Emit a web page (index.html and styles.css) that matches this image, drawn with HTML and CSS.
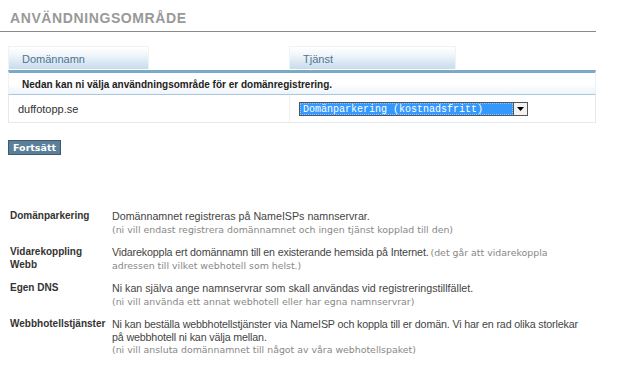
FILE: index.html
```html
<!DOCTYPE html>
<html lang="sv">
<head>
  <meta charset="UTF-8" />
  <title>Användningsområde</title>
  <link rel="stylesheet" href="styles.css">
</head>
<body>
  <div class="page">
    <h1 class="title">ANVÄNDNINGSOMRÅDE</h1>

    <div class="order">
      <div class="tabs">
        <div class="tab-col"><span class="tab tab-name">Domännamn</span></div>
        <div class="tab-col"><span class="tab tab-service">Tjänst</span></div>
      </div>
      <div class="info-row">Nedan kan ni välja användningsområde för er domänregistrering.</div>
      <div class="domain-row">
        <div class="cell domain">duffotopp.se</div>
        <div class="cell service">
          <div class="select">
            <span class="select-value">Domänparkering (kostnadsfritt)</span>
            <span class="select-arrow"><svg width="7" height="4" viewBox="0 0 7 4"><path d="M0 0h7L3.5 4z" fill="#000"/></svg></span>
          </div>
        </div>
      </div>
    </div>

    <button class="btn">Fortsätt</button>

    <table class="usage">
      <tr>
        <th>Domänparkering</th>
        <td>Domännamnet registreras på NameISPs namnservrar.<br><small>(ni vill endast registrera domännamnet och ingen tjänst kopplad till den)</small></td>
      </tr>
      <tr>
        <th>Vidarekoppling Webb</th>
        <td class="narrow">Vidarekoppla ert domännamn till en existerande hemsida på Internet.<small class="inline">(det går att vidarekoppla adressen till vilket webhotell som helst.)</small></td>
      </tr>
      <tr>
        <th>Egen DNS</th>
        <td>Ni kan själva ange namnservrar som skall användas vid registreringstillfället.<br><small>(ni vill använda ett annat webhotell eller har egna namnservrar)</small></td>
      </tr>
      <tr>
        <th>Webbhotellstjänster</th>
        <td><span class="tight">Ni kan beställa webbhotellstjänster via NameISP och koppla till er domän. Vi har en rad olika storlekar på webbhotell ni kan välja mellan.</span><br><small>(ni vill ansluta domännamnet till något av våra webhotellspaket)</small></td>
      </tr>
    </table>
  </div>
</body>
</html>
```

FILE: styles.css
```css
:root {
  --text: #333;
  --muted: #888;
  --title: #999;
  --tab-text: #4d7595;
  --bar: #7aa9c9;
  --line: #e6e9ec;
}
* { box-sizing: border-box; }
body {
  margin: 0;
  font-family: 'Liberation Sans', Arial, sans-serif;
  font-size: 11px;
  color: var(--text);
  background: #fff;
}
.page { width: 596px; }
.title {
  margin: 0;
  padding: 10px 0 5px 10px;
  font-size: 14px;
  line-height: 16px;
  letter-spacing: 0.6px;
  color: var(--title);
  border-bottom: 1px solid #8a8a8a;
}
.order { margin: 14px 0 0 8px; }
.tabs { display: flex; }
.tab-col { width: 281px; }
.tab-col:last-child { width: auto; }
.tab {
  display: block;
  height: 23px;
  line-height: 24px;
  padding-left: 13px;
  color: var(--tab-text);
  background: linear-gradient(#ffffff, #f4f8fb 30%, #c6dcec);
  border: 1px solid #eef3f7;
  border-bottom: none;
}
.tab-name { width: 141px; }
.tab-service { width: 167px; }
.info-row {
  margin-top: 1px;
  border-top: 3px solid var(--bar);
  border-left: 1px solid #eef2f5;
  border-right: 1px solid #eef2f5;
  border-bottom: 1px solid #aac7dc;
  height: 25px;
  line-height: 23px;
  padding-left: 13px;
  font-size: 10px;
  font-weight: bold;
  color: #222;
  background: linear-gradient(#ffffff, #ffffff 50%, #eef4f9);
}
.domain-row {
  display: flex;
  height: 28px;
  border: 1px solid var(--line);
  border-top: none;
}
.cell { display: flex; align-items: center; }
.domain {
  width: 281px;
  padding-left: 9px;
  border-right: 1px solid #f0f0f0;
}
.service { padding-left: 9px; }
.select {
  display: flex;
  width: 229px;
  height: 14px;
  border: 1px solid #555;
  background: #3399ff;
}
.select-value {
  flex: 1;
  padding-left: 2px;
  font-family: 'Liberation Mono', 'Courier New', monospace;
  font-size: 10px;
  line-height: 12px;
  color: #fff;
  border: 1px dotted #8fc4ff;
}
.select-arrow {
  width: 14px;
  display: flex;
  align-items: center;
  justify-content: center;
  background: #f2f2f2;
  border-left: 1px solid #555;
}
.btn {
  display: block;
  margin: 17px 0 0 8px;
  padding: 0 4px;
  height: 15px;
  font-family: 'DejaVu Sans', Verdana, sans-serif;
  font-weight: bold;
  font-size: 9.5px;
  line-height: 13px;
  color: #fff;
  background: #5b7f99;
  border: 1px solid #3d5a6e;
}
.usage {
  margin: 55px 0 0 6px;
  width: 584px;
  table-layout: fixed;
  border-collapse: collapse;
}
.usage th, .usage td {
  vertical-align: top;
  text-align: left;
  padding: 0 4px 11px;
  line-height: 12.5px;
}
.usage th { width: 102px; padding-right: 0; font-size: 10px; font-weight: bold; }
.usage td { color: #444; font-size: 10.7px; }
.usage td.narrow { letter-spacing: -0.15px; }
.usage .tight { letter-spacing: -0.15px; }
.usage small {
  font-family: 'DejaVu Sans', Verdana, sans-serif;
  font-size: 9.4px;
  line-height: 1;
  letter-spacing: 0;
  color: var(--muted);
}
.usage small.inline { margin-left: 2px; }
```
